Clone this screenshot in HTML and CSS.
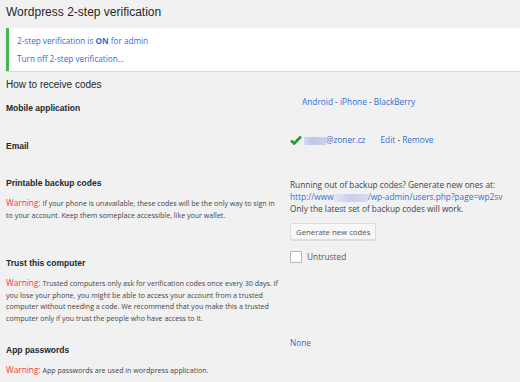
FILE: index.html
```html
<!DOCTYPE html>
<html lang="en">
<head>
  <meta charset="UTF-8">
  <title>Wordpress 2-step verification</title>
  <link rel="stylesheet" href="styles.css">
</head>
<body>

<h1 class="title">Wordpress 2-step verification</h1>

<div class="notice">
  <p><a href="#">2-step verification is <b>ON</b> for admin</a></p>
  <p><a href="#">Turn off 2-step verification...</a></p>
</div>

<h2 class="subtitle">How to receive codes</h2>

<div class="form">
  <div class="row row-mobile">
    <div class="label"><h3>Mobile application</h3></div>
    <div class="field">
      <a href="#">Android</a> - <a href="#">iPhone</a> - <a href="#">BlackBerry</a>
    </div>
  </div>

  <div class="row row-email">
    <div class="label"><h3>Email</h3></div>
    <div class="field">
      <svg class="check" width="12" height="10" viewBox="0 0 12 10"><path d="M1 5.5 L4.2 8.5 L11 1.5" fill="none" stroke="#1e9b3a" stroke-width="2.6"/></svg>
      <span class="email"><span class="redact"></span>@zoner.cz</span>
      <span class="actions"><a href="#">Edit</a> - <a href="#">Remove</a></span>
    </div>
  </div>

  <div class="row row-backup">
    <div class="label">
      <h3>Printable backup codes</h3>
      <p class="warn"><span>Warning:</span> If your phone is unavailable, these codes will be the only way to sign in to your account. Keep them someplace accessible, like your wallet.</p>
    </div>
    <div class="field">
      <p class="info">Running out of backup codes? Generate new ones at:<br>
        <a href="#">http://www<span class="redact redact-url"></span>/wp-admin/users.php?page=wp2sv</a><br>
        Only the latest set of backup codes will work.</p>
      <button class="btn">Generate new codes</button>
    </div>
  </div>

  <div class="row row-trust">
    <div class="label">
      <h3>Trust this computer</h3>
      <p class="warn"><span>Warning:</span> Trusted computers only ask for verification codes once every 30 days. If you lose your phone, you might be able to access your account from a trusted computer without needing a code. We recommend that you make this a trusted computer only if you trust the people who have access to it.</p>
    </div>
    <div class="field">
      <label class="trust"><span class="box"></span>Untrusted</label>
    </div>
  </div>

  <div class="row row-apps">
    <div class="label">
      <h3>App passwords</h3>
      <p class="warn"><span>Warning:</span> App passwords are used in wordpress application.</p>
    </div>
    <div class="field">
      <a href="#">None</a>
    </div>
  </div>
</div>

</body>
</html>
```

FILE: styles.css
```css
body {
  margin: 0;
  padding: 0 0 0 6px;
  background-color: #f1f1f1;
  color: #444;
  font-family: "Open Sans", sans-serif;
  font-size: 8px;
  overflow: hidden;
}
a {
  color: #2f6fd1;
  text-decoration: none;
}
p {
  margin: 0;
}
.title {
  margin: 0;
  padding: 4px 0 0 0;
  height: 24px;
  font-family: "Liberation Sans", Arial, sans-serif;
  font-size: 12px;
  font-weight: normal;
  color: #23282d;
  line-height: 16px;
}
.notice {
  background-color: white;
  border-left: 3px solid #46b450;
  box-shadow: 0 1px 1px rgba(0, 0, 0, 0.1);
  padding: 7px 0 4px 8px;
  height: 32px;
  font-size: 8.2px;
}
.notice p {
  line-height: 11px;
  margin-bottom: 7px;
}
.notice b {
  font-weight: 700;
}
.subtitle {
  margin: 7px 0 0 0;
  font-family: "Liberation Sans", Arial, sans-serif;
  font-size: 10px;
  font-weight: normal;
  color: #23282d;
  line-height: 13px;
}
.form {
  display: flex;
  flex-direction: column;
}
.row {
  display: grid;
  grid-template-columns: 284px 1fr;
}
.label h3 {
  margin: 0;
  font-family: "Liberation Sans", Arial, sans-serif;
  font-size: 8.5px;
  font-weight: bold;
  color: #23282d;
  line-height: 12px;
}
.field {
  font-size: 8.3px;
  line-height: 12px;
}
.warn {
  margin-top: 9px;
  font-size: 7.1px;
  line-height: 11.5px;
  width: 272px;
}
.warn span {
  color: #f33;
  font-size: 8.3px;
  line-height: 1;
}
.row-mobile {
  padding-top: 11px;
  height: 38px;
}
.row-mobile .field {
  margin-top: -6px;
  padding-left: 12px;
}
.row-email {
  height: 37px;
}
.row-email .field {
  margin-top: -6px;
  display: flex;
  align-items: center;
  height: 12px;
}
.check {
  margin-right: 2px;
}
.email {
  color: #2f6fd1;
  margin-right: 15px;
}
.redact {
  display: inline-block;
  width: 22px;
  height: 8px;
  vertical-align: middle;
  background: linear-gradient(90deg, #d4dcf0, #b8c6ea 40%, #c9d3ee);
}
.redact-url {
  width: 34px;
  background: linear-gradient(90deg, #e2e6f0, #c6d0ec 50%, #d6dcee);
}
.row-backup {
  height: 80px;
}
.row-backup .field {
  margin-top: 2px;
}
.info {
  color: #444;
}
.btn {
  margin-top: 8px;
  padding: 0 5px;
  height: 17px;
  font-family: "Open Sans", sans-serif;
  font-size: 7.8px;
  color: #555;
  background-color: #f7f7f7;
  border: 1px solid #ddd;
  border-radius: 2px;
  box-shadow: 0 1px 0 #ddd;
}
.row-trust {
  height: 87px;
}
.row-trust .field {
  margin-top: -6px;
}
.trust {
  display: flex;
  align-items: center;
  color: #555;
}
.box {
  width: 10px;
  height: 10px;
  background-color: #fefefe;
  border: 1px solid #bbb;
  margin-right: 5px;
}
.row-apps .field {
  margin-top: -7px;
}
```
